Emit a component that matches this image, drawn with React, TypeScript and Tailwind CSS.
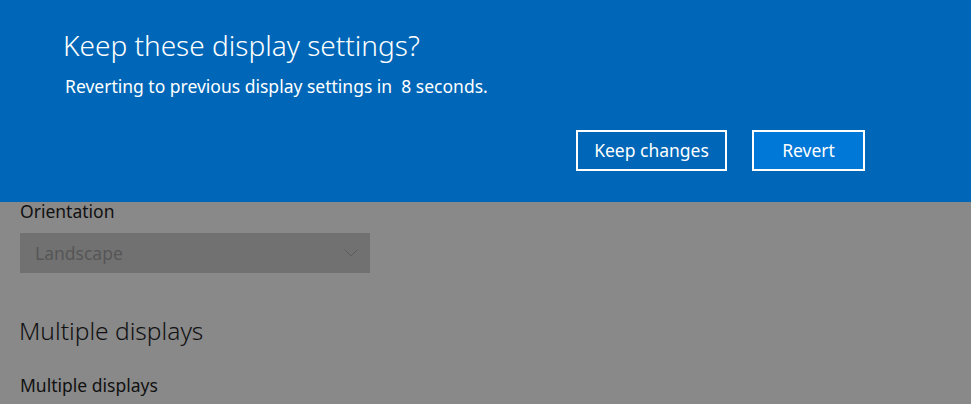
export default function App() {
  return (
    <div
      className="relative h-[404px] w-[971px] overflow-hidden bg-[#898989]"
      style={{ fontFamily: '"Noto Sans", "Open Sans", sans-serif' }}
    >
      {/* settings page behind the overlay */}
      <div className="flex flex-col px-5 pt-[199px]">
        <div className="text-[17.5px] leading-6 text-[#111]">Orientation</div>
        <div className="mt-[10px] flex h-10 w-[350px] items-center justify-between bg-[#717171] pl-[15px] pr-3">
          <span className="text-[17.5px] text-[#565656]">Landscape</span>
          <svg width="14" height="8" viewBox="0 0 14 8" fill="none" stroke="#5c5c5c" strokeWidth="1">
            <path d="M0.5 0.5 L7 7 L13.5 0.5" />
          </svg>
        </div>
        <div className="-ml-px mt-[42px] text-[24.5px] font-light leading-8 text-[#111]">Multiple displays</div>
        <div className="mt-[26px] text-[17.5px] leading-6 text-[#111]">Multiple displays</div>
      </div>

      {/* confirmation banner */}
      <div className="absolute left-0 right-0 top-0 flex h-[202px] flex-col bg-[#0067b8] pl-[63px] pr-[106px] text-white">
        <div className="mt-[28px] text-[28px] font-light leading-[34px]">Keep these display settings?</div>
        <div className="ml-[2px] mt-[12px] whitespace-pre text-[17.5px] leading-6">
          Reverting to previous display settings in  8 seconds.
        </div>
        <div className="mt-[32px] flex justify-end gap-[25px]">
          <button className="h-[41px] w-[151px] border-2 border-white bg-[#0067b8] text-[17.5px] text-white">
            Keep changes
          </button>
          <button className="h-[41px] w-[113px] border-2 border-white bg-[#0078d7] text-[17.5px] text-white">
            Revert
          </button>
        </div>
      </div>
    </div>
  );
}
